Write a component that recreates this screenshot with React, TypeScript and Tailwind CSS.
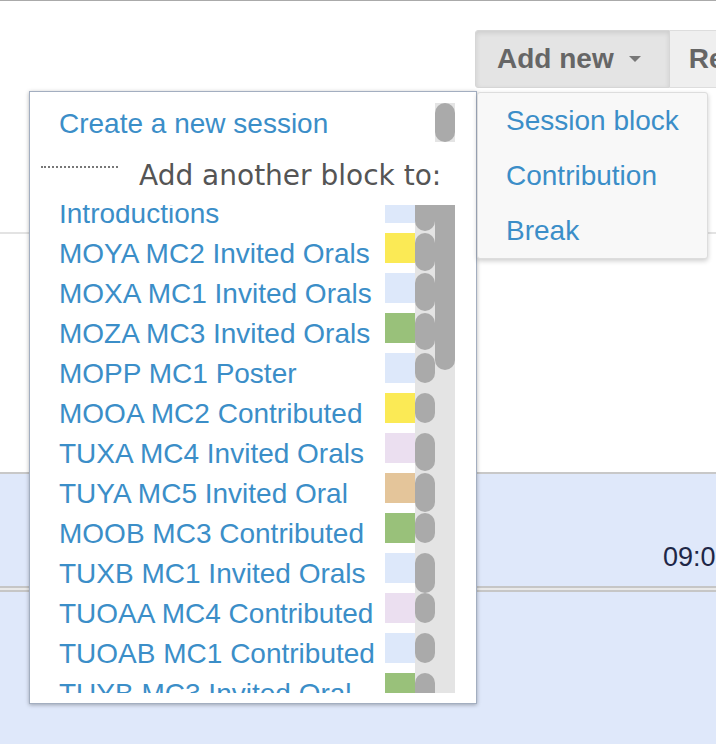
type Block = { name: string; color: string; pill: number };

const blocks: Block[] = [
  { name: "Introductions", color: "bg-[#dde8fa]", pill: 38 },
  { name: "MOYA MC2 Invited Orals", color: "bg-[#fbea55]", pill: 38 },
  { name: "MOXA MC1 Invited Orals", color: "bg-[#dde8fa]", pill: 38 },
  { name: "MOZA MC3 Invited Orals", color: "bg-[#99c17a]", pill: 37 },
  { name: "MOPP MC1 Poster", color: "bg-[#dde8fa]", pill: 30 },
  { name: "MOOA MC2 Contributed", color: "bg-[#fbea55]", pill: 30 },
  { name: "TUXA MC4 Invited Orals", color: "bg-[#ebdff0]", pill: 38 },
  { name: "TUYA MC5 Invited Oral", color: "bg-[#e4c59a]", pill: 39 },
  { name: "MOOB MC3 Contributed", color: "bg-[#99c17a]", pill: 30 },
  { name: "TUXB MC1 Invited Orals", color: "bg-[#dde8fa]", pill: 40 },
  { name: "TUOAA MC4 Contributed", color: "bg-[#ebdff0]", pill: 30 },
  { name: "TUOAB MC1 Contributed", color: "bg-[#dde8fa]", pill: 30 },
  { name: "TUYB MC3 Invited Oral", color: "bg-[#99c17a]", pill: 38 },
];

const App: React.FC = () => {
  return (
    <div className="relative h-[744px] w-[716px] overflow-hidden bg-white font-['Liberation_Sans',Arial,sans-serif]">
      <div className="h-px bg-[#aaaaaa]" />

      {/* toolbar */}
      <div className="mt-[29px] flex h-[58px] overflow-hidden pl-[475px]">
        <div className="flex shrink-0 items-center rounded-l-[3px] border border-[#d6d6d6] bg-[#e4e4e4] pl-[21px] pr-[28px] shadow-[inset_0_2px_5px_rgba(0,0,0,0.1)]">
          <span className="whitespace-nowrap text-[28px] font-bold text-[#666]">Add new</span>
          <span className="ml-[15px] h-0 w-0 border-x-[6px] border-t-[6px] border-x-transparent border-t-[#777]" />
        </div>
        <div className="flex shrink-0 items-center border-y border-[#dddddd] bg-[#efefef] pl-[19px]">
          <span className="whitespace-nowrap text-[28px] font-bold text-[#666]">Reschedule</span>
        </div>
      </div>

      <div className="h-[144px]" />
      <div className="h-[2px] bg-[#e3e3e3]" />
      <div className="h-[238px]" />

      {/* timetable */}
      <div className="border-t-2 border-[#c8c8c8] bg-[#dfe8fa]">
        <div className="h-[112px] whitespace-nowrap pl-[663px] pt-[68px] text-[27px] leading-[30px] text-[#1e2747]">
          09:00
        </div>
        <div className="h-[6px] border-y-2 border-[#c6c6c6] bg-[#e9e9e9]" />
        <div className="h-[160px]" />
      </div>

      {/* session popup */}
      <div className="absolute left-[29px] top-[91px] w-[448px] border border-[#a3aec0] bg-white pb-[10px] pt-[12px] shadow-[0_1px_4px_rgba(0,0,0,0.3)]">
        <div className="flex h-[40px] items-start pl-[29px] pr-[21px]">
          <span className="flex-1 text-[28px] leading-[40px] text-[#3b8ec8]">Create a new session</span>
          <div className="mt-[-1px] h-[39px] w-[20px] bg-[#e4e4e4]">
            <div className="h-full w-full rounded-full bg-[#aaaaaa]" />
          </div>
        </div>

        <div className="mt-[12px] flex h-[38px] items-start">
          <div className="ml-[11px] mt-[10px] w-[77px] border-t-2 border-dotted border-[#777]" />
          <span className="ml-[21px] whitespace-nowrap font-['DejaVu_Sans',sans-serif] text-[28px] leading-[40px] text-[#555]">
            Add another block to:
          </span>
        </div>

        <div className="relative mt-[11px] h-[488px] w-[425px] overflow-hidden">
          <div className="-mt-[12px] flex flex-col">
            {blocks.map((b) => (
              <div key={b.name} className="flex h-[40px]">
                <span className="w-[355px] overflow-hidden whitespace-nowrap pl-[29px] pt-px text-[28px] leading-[40px] text-[#3b8ec8]">
                  {b.name}
                </span>
                <div className={`h-[30px] w-[30px] ${b.color}`} />
                <div className="w-[40px] bg-[#e4e4e4]">
                  <div className="w-[20px] rounded-full bg-[#aaaaaa]" style={{ height: b.pill }} />
                </div>
              </div>
            ))}
          </div>
          <div className="absolute right-0 top-0 h-[165px] w-[20px] rounded-b-[10px] bg-[#aaaaaa]" />
        </div>
      </div>

      {/* add new menu */}
      <div className="absolute left-[477px] top-[92px] w-[231px] rounded-[3px] border border-[#dddddd] bg-[#f8f8f8] shadow-[0_2px_5px_rgba(0,0,0,0.2)]">
        {["Session block", "Contribution", "Break"].map((item) => (
          <div key={item} className="h-[55px] pl-[28px] text-[28px] leading-[55px] text-[#3b8ec8]">
            {item}
          </div>
        ))}
      </div>
    </div>
  );
};

export default App;
